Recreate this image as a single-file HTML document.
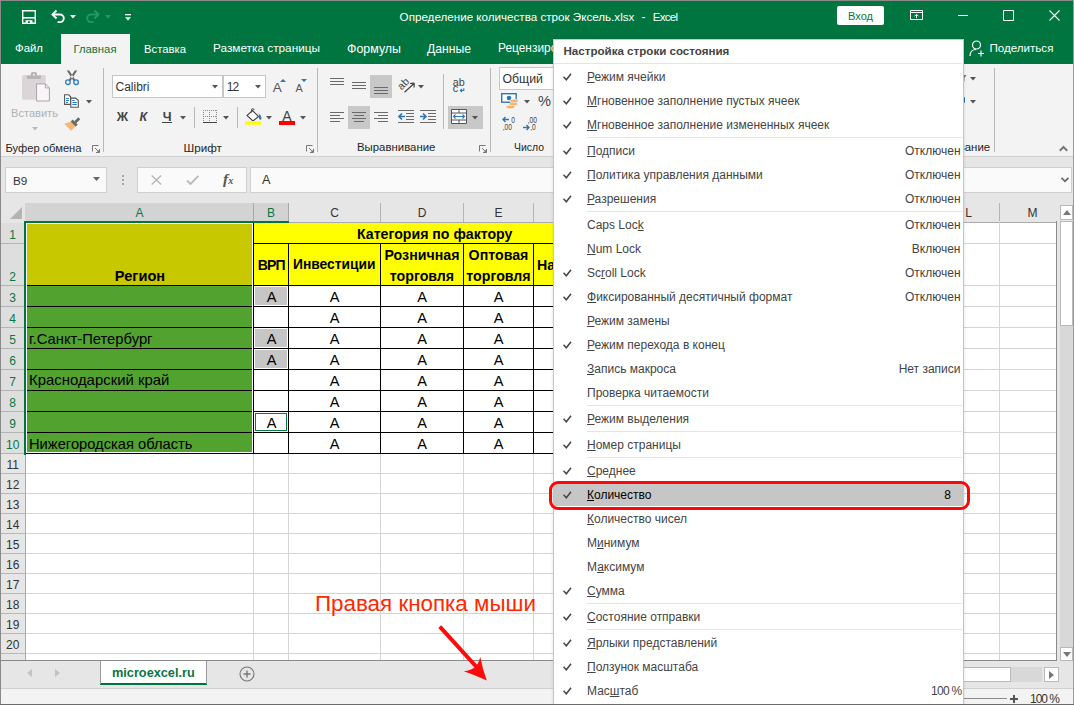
<!DOCTYPE html><html lang="ru"><head><meta charset="utf-8"><title>Excel</title><style>
*{box-sizing:border-box;margin:0;padding:0}
html,body{width:1074px;height:705px;overflow:hidden;background:#fff}
body{font-family:"Liberation Sans",sans-serif;font-size:12px;color:#444;position:relative}
.a{position:absolute}
.t{position:absolute;white-space:nowrap;line-height:1}
.w{color:#fff}
.g{color:#0a7641}
.ms{position:absolute;left:587px;width:375px;height:1px;background:#e2e4e7}
u{text-decoration:underline;text-underline-offset:.5px;text-decoration-thickness:1px}
</style></head><body><div class="a" style="left:0px;top:0px;width:1074px;height:64px;background:#007540;"></div><div class="t w" style="left:399.6px;top:10.83px;font-size:11.63px;">Определение количества строк Эксель.xlsx</div><div class="t w" style="left:641.5px;top:11.15px;font-size:12px;">-</div><div class="t w" style="left:652.8px;top:11.35px;font-size:11.6px;letter-spacing:-0.773px;">Excel</div><svg class="a" style="left:22px;top:10px" width="14" height="14" viewBox="0 0 14 14"><path d="M.7.7h12.600v12.600H.7z" fill="none" stroke="#fff" stroke-width="1.4"/><path d="M1 7.800h12" stroke="#fff" stroke-width="1.6"/><path d="M3.5 10.200h7V13h-7z" fill="#fff"/><path d="M6 11.200h1.800V13H6z" fill="#007540"/></svg><svg class="a" style="left:50px;top:9px" width="16" height="16" viewBox="0 0 16 16"><path d="M2.5 5.500h7.500a3.8 3.8 0 0 1 0 7.600H7.5" fill="none" stroke="#fff" stroke-width="1.9"/><path d="M6.5 1.500l-4 4 4 4" fill="none" stroke="#fff" stroke-width="1.9"/></svg><svg class="a" style="left:70px;top:15px" width="6" height="4" viewBox="0 0 6 4"><path d="M0 0h6L3 3.500z" fill="#fff"/></svg><svg class="a" style="left:85px;top:9px" width="16" height="16" viewBox="0 0 16 16"><path d="M13.5 5.500H6a3.8 3.8 0 0 0 0 7.600h2.5" fill="none" stroke="#23996a" stroke-width="1.9"/><path d="M9.5 1.500l4 4-4 4" fill="none" stroke="#23996a" stroke-width="1.9"/></svg><svg class="a" style="left:105px;top:15px" width="6" height="4" viewBox="0 0 6 4"><path d="M0 0h6L3 3.500z" fill="#23996a"/></svg><svg class="a" style="left:125px;top:14px" width="6" height="8" viewBox="0 0 6 8"><path d="M0 0h6v1.300H0z" fill="#fff"/><path d="M0 3.200h6L3 6.500z" fill="#fff"/></svg><div class="a" style="left:837px;top:6px;width:47px;height:19px;background:#fff;border-radius:2px"></div><div class="t g" style="left:848px;top:10.62px;font-size:11.05px;">Вход</div><svg class="a" style="left:910px;top:10px" width="13" height="10" viewBox="0 0 13 10"><path d="M.5.5h12v9H.5z" fill="none" stroke="#fff"/><path d="M.5 2.500h12" stroke="#fff"/><path d="M6.5 8V4.500M4.5 6.300l2-2 2 2" fill="none" stroke="#fff"/></svg><div class="a" style="left:958px;top:15px;width:10px;height:1px;background:#fff;"></div><svg class="a" style="left:1003px;top:10px" width="11" height="11" viewBox="0 0 11 11"><path d="M.5.5h10v10H.5z" fill="none" stroke="#fff"/></svg><svg class="a" style="left:1049px;top:10px" width="11" height="11" viewBox="0 0 11 11"><path d="M.5.5l10 10M10.5 .5l-10 10" stroke="#fff" stroke-width="1.1"/></svg><div class="a" style="left:61px;top:34px;width:69px;height:30px;background:#f3f3f3;"></div><div class="t w" style="left:15px;top:43.45px;font-size:11.39px;">Файл</div><div class="t g" style="left:73.5px;top:43.5px;font-size:11.3px;">Главная</div><div class="t w" style="left:144px;top:43.5px;font-size:11.3px;">Вставка</div><div class="t w" style="left:213px;top:43.25px;font-size:11.8px;">Разметка страницы</div><div class="t w" style="left:347px;top:42.95px;font-size:12.41px;">Формулы</div><div class="t w" style="left:427px;top:43.06px;font-size:12.18px;">Данные</div><div class="t w" style="left:498px;top:43.19px;font-size:11.92px;">Рецензирование</div><div class="t w" style="left:989.5px;top:43.35px;font-size:11.59px;">Поделиться</div><svg class="a" style="left:969px;top:40px" width="16" height="17" viewBox="0 0 16 17"><circle cx="7.5" cy="5" r="4" fill="none" stroke="#fff" stroke-width="1.2"/><path d="M1 16c0-4 2.5-6.5 6-6.5" fill="none" stroke="#fff" stroke-width="1.2"/><path d="M9 13.500h6M12 10.500v6" stroke="#fff" stroke-width="1.2"/></svg><div class="a" style="left:0px;top:64px;width:1074px;height:92px;background:#f3f3f3;"></div><div class="a" style="left:0px;top:156px;width:1074px;height:1px;background:#d0d0d0;"></div><div class="a" style="left:0px;top:157px;width:1074px;height:548px;background:#e6e6e6;"></div><svg class="a" style="left:22px;top:71px" width="29" height="32" viewBox="0 0 29 32"><rect x="0" y="4" width="23.8" height="24.7" rx="1.8" fill="#dbd5d8"/><rect x="4.9" y="4.4" width="14.1" height="3.6" rx=".8" fill="#b9b3b6"/><rect x="8.9" y="1.1" width="6" height="5" rx="1.5" fill="#b9b3b6"/><circle cx="11.9" cy="3.8" r="1" fill="#f3f3f3"/><path d="M14.6 12.900h8.800l4 4v13.100h-12.800z" fill="#f9f5f8" stroke="#aaa4a7"/><path d="M23.4 12.900v4h4" fill="none" stroke="#aaa4a7"/></svg><div class="t " style="left:11px;top:107.61px;font-size:11.09px;color:#b1b1b1">Вставить</div><svg class="a" style="left:32px;top:127px" width="6" height="4" viewBox="0 0 6 4"><path d="M0 0h6L3 3.500z" fill="#b9b9b9"/></svg><svg class="a" style="left:64px;top:70px" width="16" height="16" viewBox="0 0 16 16"><path d="M2.8 .5h2.400l6 9.3-1.7 1.200zM13.2 .5h-2.400l-6 9.3 1.7 1.200z" fill="#666"/><circle cx="3.9" cy="12.2" r="2.3" fill="none" stroke="#2f7dc1" stroke-width="1.3"/><circle cx="12.1" cy="12.2" r="2.3" fill="none" stroke="#2f7dc1" stroke-width="1.3"/></svg><svg class="a" style="left:64px;top:94px" width="16" height="15" viewBox="0 0 16 15"><path d="M.6.800h4l2 2v7.600h-6z" fill="#fff" stroke="#555" stroke-width="1.1"/><path d="M2 4.500h3M2 6.500h3M2 8.500h2" stroke="#2f7dc1"/><path d="M6.8 4.100h5l2.5 2.500v6.600H6.800z" fill="#fff" stroke="#555" stroke-width="1.1"/><path d="M8.3 8.500h4.500M8.3 10.500h4.500M8.3 6.500h2.5" stroke="#2f7dc1"/></svg><svg class="a" style="left:86px;top:100px" width="6" height="4" viewBox="0 0 6 4"><path d="M0 0h6L3 3.500z" fill="#555"/></svg><svg class="a" style="left:64px;top:117px" width="17" height="15" viewBox="0 0 17 15"><path d="M15.3 1.300l-4 4" stroke="#666" stroke-width="2.7"/><path d="M7.6 3.600l5 5" stroke="#6a6a6a" stroke-width="3"/><path d="M.3 6.700l6.2-2 4.8 4.8-4.2 4.200z" fill="#f6b772"/></svg><div class="t " style="left:5.5px;top:142.56px;font-size:11.19px;color:#262626">Буфер обмена</div><svg class="a" style="left:92px;top:145px" width="8" height="8" viewBox="0 0 8 8"><path d="M.5 6.500V.5h6" fill="none" stroke="#777"/><path d="M3 3l4 4M7.5 4v3.500H4" fill="none" stroke="#777"/><path d="M7.5 7.500l-3 0 3-3z" fill="#777"/></svg><div class="a" style="left:103px;top:68px;width:1px;height:84px;background:#b9b9b9;"></div><div class="a" style="left:112px;top:75px;width:111px;height:23px;background:#fff;border:1px solid #c6c6c6"></div><div class="t " style="left:115.5px;top:81.15px;font-size:12.0px;color:#333">Calibri</div><svg class="a" style="left:212px;top:85px" width="6" height="4" viewBox="0 0 6 4"><path d="M0 0h6L3 3.500z" fill="#555"/></svg><div class="a" style="left:223px;top:75px;width:43px;height:23px;background:#fff;border:1px solid #c6c6c6"></div><div class="t " style="left:226.7px;top:81.15px;font-size:12px;letter-spacing:-0.923px;color:#333">12</div><svg class="a" style="left:255px;top:85px" width="6" height="4" viewBox="0 0 6 4"><path d="M0 0h6L3 3.500z" fill="#555"/></svg><div class="t " style="left:272.7px;top:80.9px;font-size:13.5px;color:#555">A</div><svg class="a" style="left:280px;top:79px" width="6" height="3" viewBox="0 0 6 3"><path d="M0 3L3 0l3 3z" fill="#2e75b6"/></svg><div class="t " style="left:295.5px;top:82.75px;font-size:10.8px;color:#555">A</div><svg class="a" style="left:301px;top:79px" width="6" height="3" viewBox="0 0 6 3"><path d="M0 0h6L3 3z" fill="#2e75b6"/></svg><div class="t " style="left:116.8px;top:110.9px;font-size:12.5px;font-weight:bold;color:#444">Ж</div><div class="t " style="left:139.5px;top:110.9px;font-size:12.5px;font-weight:bold;font-style:italic;color:#444">К</div><div class="t " style="left:162.7px;top:110.9px;font-size:12.5px;font-weight:bold;color:#444">Ч</div><div class="a" style="left:162px;top:122px;width:10px;height:1px;background:#444;"></div><svg class="a" style="left:180px;top:116px" width="6" height="4" viewBox="0 0 6 4"><path d="M0 0h6L3 3.500z" fill="#555"/></svg><div class="a" style="left:194px;top:107px;width:1px;height:21px;background:#b9b9b9;"></div><svg class="a" style="left:203px;top:110px" width="14" height="14" viewBox="0 0 14 14"><path shape-rendering="crispEdges" d="M0 .5h14M0 6.500h14M.5 0v12M6.5 0v12M13.5 0v12" fill="none" stroke="#8a8a8a" stroke-dasharray="1 1"/><path shape-rendering="crispEdges" d="M0 12.500h14" stroke="#444"/></svg><svg class="a" style="left:223px;top:116px" width="6" height="4" viewBox="0 0 6 4"><path d="M0 0h6L3 3.500z" fill="#555"/></svg><div class="a" style="left:237px;top:107px;width:1px;height:21px;background:#b9b9b9;"></div><svg class="a" style="left:245px;top:108px" width="18" height="17" viewBox="0 0 18 17"><path d="M7.5 2.500l6 6-5.5 4.5-6-5.500z" fill="#fff" stroke="#444" stroke-width="1.1"/><path d="M6.5 4.500V2a1.3 1.3 0 0 1 2.6 0" stroke="#444" stroke-width="1" fill="none"/><path d="M13 5c2.5 1.5 4.5 5 3 6.5-1.5 1-3-1.5-1.8-4.500z" fill="#2e75b6"/><path d="M0 13.200h16v3.500H0z" fill="#ffff00"/></svg><svg class="a" style="left:266px;top:116px" width="6" height="4" viewBox="0 0 6 4"><path d="M0 0h6L3 3.500z" fill="#555"/></svg><div class="t " style="left:282.3px;top:109.15px;font-size:14px;color:#444">A</div><div class="a" style="left:279px;top:121px;width:16px;height:4px;background:#ff0000;"></div><svg class="a" style="left:300px;top:116px" width="6" height="4" viewBox="0 0 6 4"><path d="M0 0h6L3 3.500z" fill="#555"/></svg><div class="t " style="left:183.5px;top:141.8px;font-size:11.7px;color:#262626">Шрифт</div><svg class="a" style="left:306px;top:145px" width="8" height="8" viewBox="0 0 8 8"><path d="M.5 6.500V.5h6" fill="none" stroke="#777"/><path d="M3 3l4 4M7.5 4v3.500H4" fill="none" stroke="#777"/><path d="M7.5 7.500l-3 0 3-3z" fill="#777"/></svg><div class="a" style="left:317px;top:68px;width:1px;height:84px;background:#b9b9b9;"></div><svg class="a" style="left:330px;top:78px" width="16" height="7" viewBox="0 0 16 7"><path d="M0 0.5h14" stroke="#6a6a6a"/><path d="M0 3.5h14" stroke="#6a6a6a"/><path d="M0 6.5h14" stroke="#6a6a6a"/></svg><svg class="a" style="left:352px;top:82px" width="16" height="7" viewBox="0 0 16 7"><path d="M0 0.5h14" stroke="#6a6a6a"/><path d="M0 3.5h14" stroke="#6a6a6a"/><path d="M0 6.5h14" stroke="#6a6a6a"/></svg><div class="a" style="left:370px;top:75px;width:22px;height:23px;background:#c8c8c8;"></div><svg class="a" style="left:374px;top:87px" width="16" height="7" viewBox="0 0 16 7"><path d="M0 0.5h14" stroke="#6a6a6a"/><path d="M0 3.5h14" stroke="#6a6a6a"/><path d="M0 6.5h14" stroke="#6a6a6a"/></svg><svg class="a" style="left:397px;top:77px" width="19" height="17" viewBox="0 0 19 17"><text x="0" y="0" font-size="10.5" fill="#444" transform="translate(4.5 13.5) rotate(-45)" font-family="Liberation Sans">ab</text><path d="M7.5 15.300L17 6.500M17.3 6.200l-4.3.3M17.3 6.200l-.3 4.3" stroke="#444" fill="none" stroke-width="1.2"/></svg><svg class="a" style="left:418px;top:85px" width="6" height="4" viewBox="0 0 6 4"><path d="M0 0h6L3 3.500z" fill="#555"/></svg><svg class="a" style="left:452px;top:77px" width="16" height="18" viewBox="0 0 16 18"><text x=".7" y="9" font-size="10.8" fill="#444" font-family="Liberation Sans">ab</text><text x=".7" y="15.3" font-size="10.8" fill="#444" font-family="Liberation Sans">c</text><path d="M11.8 11.300v2.200H8.300M10 12l-1.6 1.5 1.6 1.5" stroke="#2e75b6" fill="none" stroke-width="1.1"/></svg><svg class="a" style="left:330px;top:112px" width="16" height="10" viewBox="0 0 16 10"><path d="M0 0.5h14" stroke="#6a6a6a"/><path d="M0 3.5h10" stroke="#6a6a6a"/><path d="M0 6.5h14" stroke="#6a6a6a"/><path d="M0 9.5h10" stroke="#6a6a6a"/></svg><div class="a" style="left:348px;top:106px;width:22px;height:23px;background:#c8c8c8;"></div><svg class="a" style="left:352px;top:112px" width="16" height="10" viewBox="0 0 16 10"><path d="M0 0.5h14" stroke="#6a6a6a"/><path d="M2 3.5h10" stroke="#6a6a6a"/><path d="M0 6.5h14" stroke="#6a6a6a"/><path d="M2 9.5h10" stroke="#6a6a6a"/></svg><svg class="a" style="left:374px;top:112px" width="16" height="10" viewBox="0 0 16 10"><path d="M0 0.5h14" stroke="#6a6a6a"/><path d="M4 3.5h10" stroke="#6a6a6a"/><path d="M0 6.5h14" stroke="#6a6a6a"/><path d="M4 9.5h10" stroke="#6a6a6a"/></svg><svg class="a" style="left:398px;top:110px" width="16" height="13" viewBox="0 0 16 13"><path d="M0 .5h16M8 3.500h8M8 6.500h8M8 9.500h8M0 12.500h16" stroke="#6a6a6a"/><path d="M7 6.500H1.500M4 3.500L1 6.500l3 3" stroke="#2e75b6" fill="none" stroke-width="1.6"/></svg><svg class="a" style="left:420px;top:110px" width="16" height="13" viewBox="0 0 16 13"><path d="M0 .5h16M8 3.500h8M8 6.500h8M8 9.500h8M0 12.500h16" stroke="#6a6a6a"/><path d="M0 6.500h5.500M3 3.500l3 3-3 3" stroke="#2e75b6" fill="none" stroke-width="1.6"/></svg><div class="a" style="left:443px;top:74px;width:1px;height:55px;background:#b9b9b9;"></div><div class="a" style="left:448px;top:106px;width:35px;height:23px;background:#c8c8c8;"></div><svg class="a" style="left:451px;top:109px" width="16" height="15" viewBox="0 0 16 15"><path d="M.5.5h15v14H.5z" fill="#fff" stroke="#555"/><path d="M.5 4h15M.5 11h15M8 .5v3.500M8 11v3.5" stroke="#555" fill="none"/><path d="M3 7.500h10M4.5 5.500l-2 2 2 2M11.5 5.500l2 2-2 2" stroke="#2e75b6" fill="none" stroke-width="1.1"/></svg><svg class="a" style="left:472px;top:116px" width="6" height="4" viewBox="0 0 6 4"><path d="M0 0h6L3 3.500z" fill="#555"/></svg><div class="t " style="left:357px;top:142.45px;font-size:11.4px;color:#262626">Выравнивание</div><svg class="a" style="left:479px;top:145px" width="8" height="8" viewBox="0 0 8 8"><path d="M.5 6.500V.5h6" fill="none" stroke="#777"/><path d="M3 3l4 4M7.5 4v3.500H4" fill="none" stroke="#777"/><path d="M7.5 7.500l-3 0 3-3z" fill="#777"/></svg><div class="a" style="left:490px;top:68px;width:1px;height:84px;background:#b9b9b9;"></div><div class="a" style="left:499px;top:67px;width:120px;height:23px;background:#fff;border:1px solid #c6c6c6"></div><div class="t " style="left:502.5px;top:73.0px;font-size:12.31px;color:#333">Общий</div><svg class="a" style="left:501px;top:93px" width="19" height="17" viewBox="0 0 19 17"><rect x=".7" y=".7" width="14.5" height="8.5" fill="#fff" stroke="#2e75b6" stroke-width="1.4"/><circle cx="8" cy="5" r="2.3" fill="#2e75b6"/><ellipse cx="13" cy="8" rx="4.3" ry="1.7" fill="#f4b26a" stroke="#f3f3f3" stroke-width=".6"/><ellipse cx="12.5" cy="11" rx="4.3" ry="1.7" fill="#f4b26a" stroke="#f3f3f3" stroke-width=".6"/><ellipse cx="9.5" cy="14" rx="4.3" ry="1.7" fill="#f4b26a" stroke="#f3f3f3" stroke-width=".6"/></svg><svg class="a" style="left:524px;top:100px" width="6" height="4" viewBox="0 0 6 4"><path d="M0 0h6L3 3.500z" fill="#555"/></svg><div class="t " style="left:538px;top:93.84px;font-size:14.62px;color:#444">%</div><svg class="a" style="left:502px;top:116px" width="16" height="15" viewBox="0 0 16 15"><path d="M7 3.500H1M3.5 1L1 3.5 3.5 6" stroke="#2e75b6" fill="none" stroke-width="1.4"/><g transform="scale(.72 1)" font-size="9.3" fill="#444" font-family="Liberation Sans"><text x="13" y="7">0</text><text x="1" y="14.5">,00</text></g></svg><svg class="a" style="left:523px;top:116px" width="17" height="15" viewBox="0 0 17 15"><g transform="scale(.72 1)" font-size="9.3" fill="#444" font-family="Liberation Sans"><text x="6.5" y="7">,00</text><text x="10" y="14.5">,0</text></g><path d="M0 11.500h6M3.5 9L6 11.5 3.5 14" stroke="#2e75b6" fill="none" stroke-width="1.4"/></svg><div class="t " style="left:514px;top:143.44px;font-size:10.43px;color:#262626">Число</div><svg class="a" style="left:970px;top:77px" width="6" height="4" viewBox="0 0 6 4"><path d="M0 0h6L3 3.500z" fill="#555"/></svg><svg class="a" style="left:970px;top:100px" width="6" height="4" viewBox="0 0 6 4"><path d="M0 0h6L3 3.500z" fill="#555"/></svg><svg class="a" style="left:960px;top:75px" width="7" height="7" viewBox="0 0 7 7"><path d="M0 0h6.500L4.5 3v3.500L3 5.500V3z" fill="#777"/></svg><div class="a" style="left:963px;top:97px;width:2px;height:6px;background:#2e75b6;border-radius:1px"></div><div class="t " style="left:958.8px;top:142.43px;font-size:11.45px;color:#262626">вание</div><div class="a" style="left:994px;top:68px;width:1px;height:84px;background:#b9b9b9;"></div><svg class="a" style="left:1059px;top:145px" width="10" height="7" viewBox="0 0 10 7"><path d="M.8 5.700l3.7-3.7 3.7 3.7" fill="none" stroke="#777" stroke-width="2"/></svg><div class="a" style="left:5px;top:167px;width:102px;height:26px;background:#fafafa;border:1px solid #cfcfcf"></div><div class="t " style="left:13px;top:174.81px;font-size:11.69px;color:#333">B9</div><svg class="a" style="left:93px;top:177px" width="7" height="4" viewBox="0 0 7 4"><path d="M0 0h7L3.5 4z" fill="#666"/></svg><div class="a" style="left:122px;top:175px;width:2px;height:2px;background:#a8a8a8;"></div><div class="a" style="left:122px;top:179px;width:2px;height:2px;background:#a8a8a8;"></div><div class="a" style="left:122px;top:183px;width:2px;height:2px;background:#a8a8a8;"></div><div class="a" style="left:137px;top:167px;width:110px;height:26px;background:#fafafa;border:1px solid #cfcfcf"></div><svg class="a" style="left:151px;top:175px" width="11" height="10" viewBox="0 0 11 10"><path d="M.7.5l9.5 9M10.2 .5l-9.5 9" stroke="#b9b9b9" stroke-width="1.5"/></svg><svg class="a" style="left:186px;top:175px" width="14" height="10" viewBox="0 0 14 10"><path d="M1 5.500l3.5 3.500L12.5 .8" stroke="#b9b9b9" stroke-width="1.8" fill="none"/></svg><div class="t " style="left:223px;top:171px;font-size:15.500px;color:#555"><i style="font-family:'Liberation Serif',serif;font-weight:bold">f</i><span style="font-size:10px;font-style:italic;font-weight:bold;font-family:'Liberation Serif',serif">x</span></div><div class="a" style="left:250px;top:167px;width:822px;height:26px;background:#fafafa;border:1px solid #cfcfcf"></div><div class="t " style="left:262px;top:174.28px;font-size:12.74px;color:#333">A</div><svg class="a" style="left:1061px;top:177px" width="8" height="6" viewBox="0 0 8 6"><path d="M.5.800l3.5 3.5 3.5-3.5" fill="none" stroke="#666" stroke-width="1.7"/></svg><div class="a" style="left:25px;top:223px;width:1032px;height:437px;background:#fff;"></div><div class="a" style="left:25px;top:203px;width:264px;height:18px;background:#d3d3d3;"></div><div class="t " style="left:135.5px;top:207.15px;font-size:12px;color:#0a7641">A</div><div class="a" style="left:253px;top:203px;width:1px;height:19px;background:#a8a8a8;"></div><div class="t " style="left:267.0px;top:207.15px;font-size:12px;color:#0a7641">B</div><div class="a" style="left:288px;top:203px;width:1px;height:19px;background:#a8a8a8;"></div><div class="t " style="left:330.17px;top:207.15px;font-size:12px;color:#333">C</div><div class="a" style="left:380px;top:203px;width:1px;height:19px;background:#b4b4b4;"></div><div class="t " style="left:417.67px;top:207.15px;font-size:12px;color:#333">D</div><div class="a" style="left:463px;top:203px;width:1px;height:19px;background:#b4b4b4;"></div><div class="t " style="left:494.5px;top:207.15px;font-size:12px;color:#333">E</div><div class="a" style="left:533px;top:203px;width:1px;height:19px;background:#b4b4b4;"></div><div class="t " style="left:563.34px;top:207.15px;font-size:12px;color:#333">F</div><div class="a" style="left:600px;top:203px;width:1px;height:19px;background:#b4b4b4;"></div><div class="t " style="left:965.16px;top:207.15px;font-size:12px;color:#333">L</div><div class="a" style="left:999px;top:203px;width:1px;height:19px;background:#b4b4b4;"></div><div class="t " style="left:1027.5px;top:207.15px;font-size:12px;color:#333">M</div><div class="a" style="left:1065px;top:203px;width:1px;height:19px;background:#b4b4b4;"></div><div class="a" style="left:289px;top:222px;width:768px;height:1px;background:#ababab;"></div><svg class="a" style="left:10px;top:207px" width="12" height="12" viewBox="0 0 12 12"><path d="M12 0v12H0z" fill="#b4b4b4"/></svg><div class="a" style="left:1px;top:223px;width:23px;height:231px;background:#dedede;"></div><div class="t " style="left:9.36px;top:229.15px;font-size:12px;color:#0a7641">1</div><div class="a" style="left:1px;top:243px;width:24px;height:1px;background:#b4b4b4;"></div><div class="t " style="left:9.36px;top:271.15px;font-size:12px;color:#0a7641">2</div><div class="a" style="left:1px;top:285px;width:24px;height:1px;background:#b4b4b4;"></div><div class="t " style="left:9.36px;top:292.15px;font-size:12px;color:#0a7641">3</div><div class="a" style="left:1px;top:306px;width:24px;height:1px;background:#b4b4b4;"></div><div class="t " style="left:9.36px;top:313.15px;font-size:12px;color:#0a7641">4</div><div class="a" style="left:1px;top:327px;width:24px;height:1px;background:#b4b4b4;"></div><div class="t " style="left:9.36px;top:334.15px;font-size:12px;color:#0a7641">5</div><div class="a" style="left:1px;top:348px;width:24px;height:1px;background:#b4b4b4;"></div><div class="t " style="left:9.36px;top:355.15px;font-size:12px;color:#0a7641">6</div><div class="a" style="left:1px;top:369px;width:24px;height:1px;background:#b4b4b4;"></div><div class="t " style="left:9.36px;top:376.15px;font-size:12px;color:#0a7641">7</div><div class="a" style="left:1px;top:390px;width:24px;height:1px;background:#b4b4b4;"></div><div class="t " style="left:9.36px;top:397.15px;font-size:12px;color:#0a7641">8</div><div class="a" style="left:1px;top:411px;width:24px;height:1px;background:#b4b4b4;"></div><div class="t " style="left:9.36px;top:418.15px;font-size:12px;color:#0a7641">9</div><div class="a" style="left:1px;top:432px;width:24px;height:1px;background:#b4b4b4;"></div><div class="t " style="left:6.03px;top:439.15px;font-size:12px;color:#0a7641">10</div><div class="a" style="left:1px;top:453px;width:24px;height:1px;background:#b4b4b4;"></div><div class="t " style="left:6.47px;top:459.15px;font-size:12px;color:#333">11</div><div class="a" style="left:1px;top:473px;width:24px;height:1px;background:#b8b8b8;"></div><div class="t " style="left:6.03px;top:479.15px;font-size:12px;color:#333">12</div><div class="a" style="left:1px;top:493px;width:24px;height:1px;background:#b8b8b8;"></div><div class="t " style="left:6.03px;top:499.15px;font-size:12px;color:#333">13</div><div class="a" style="left:1px;top:513px;width:24px;height:1px;background:#b8b8b8;"></div><div class="t " style="left:6.03px;top:519.15px;font-size:12px;color:#333">14</div><div class="a" style="left:1px;top:533px;width:24px;height:1px;background:#b8b8b8;"></div><div class="t " style="left:6.03px;top:539.15px;font-size:12px;color:#333">15</div><div class="a" style="left:1px;top:553px;width:24px;height:1px;background:#b8b8b8;"></div><div class="t " style="left:6.03px;top:559.15px;font-size:12px;color:#333">16</div><div class="a" style="left:1px;top:573px;width:24px;height:1px;background:#b8b8b8;"></div><div class="t " style="left:6.03px;top:579.15px;font-size:12px;color:#333">17</div><div class="a" style="left:1px;top:593px;width:24px;height:1px;background:#b8b8b8;"></div><div class="t " style="left:6.03px;top:599.15px;font-size:12px;color:#333">18</div><div class="a" style="left:1px;top:613px;width:24px;height:1px;background:#b8b8b8;"></div><div class="t " style="left:6.03px;top:619.15px;font-size:12px;color:#333">19</div><div class="a" style="left:1px;top:633px;width:24px;height:1px;background:#b8b8b8;"></div><div class="t " style="left:6.03px;top:639.15px;font-size:12px;color:#333">20</div><div class="a" style="left:1px;top:653px;width:24px;height:1px;background:#b8b8b8;"></div><div class="a" style="left:25px;top:455px;width:1px;height:205px;background:#a8a8a8;"></div><div class="a" style="left:26px;top:473px;width:1030px;height:1px;background:#d4d4d4;"></div><div class="a" style="left:26px;top:493px;width:1030px;height:1px;background:#d4d4d4;"></div><div class="a" style="left:26px;top:513px;width:1030px;height:1px;background:#d4d4d4;"></div><div class="a" style="left:26px;top:533px;width:1030px;height:1px;background:#d4d4d4;"></div><div class="a" style="left:26px;top:553px;width:1030px;height:1px;background:#d4d4d4;"></div><div class="a" style="left:26px;top:573px;width:1030px;height:1px;background:#d4d4d4;"></div><div class="a" style="left:26px;top:593px;width:1030px;height:1px;background:#d4d4d4;"></div><div class="a" style="left:26px;top:613px;width:1030px;height:1px;background:#d4d4d4;"></div><div class="a" style="left:26px;top:633px;width:1030px;height:1px;background:#d4d4d4;"></div><div class="a" style="left:26px;top:653px;width:1030px;height:1px;background:#d4d4d4;"></div><div class="a" style="left:253px;top:454px;width:1px;height:206px;background:#d4d4d4;"></div><div class="a" style="left:288px;top:454px;width:1px;height:206px;background:#d4d4d4;"></div><div class="a" style="left:380px;top:454px;width:1px;height:206px;background:#d4d4d4;"></div><div class="a" style="left:463px;top:454px;width:1px;height:206px;background:#d4d4d4;"></div><div class="a" style="left:533px;top:454px;width:1px;height:206px;background:#d4d4d4;"></div><div class="a" style="left:999px;top:454px;width:1px;height:206px;background:#d4d4d4;"></div><div class="a" style="left:964px;top:243px;width:92px;height:1px;background:#d4d4d4;"></div><div class="a" style="left:964px;top:285px;width:92px;height:1px;background:#d4d4d4;"></div><div class="a" style="left:964px;top:306px;width:92px;height:1px;background:#d4d4d4;"></div><div class="a" style="left:964px;top:327px;width:92px;height:1px;background:#d4d4d4;"></div><div class="a" style="left:964px;top:348px;width:92px;height:1px;background:#d4d4d4;"></div><div class="a" style="left:964px;top:369px;width:92px;height:1px;background:#d4d4d4;"></div><div class="a" style="left:964px;top:390px;width:92px;height:1px;background:#d4d4d4;"></div><div class="a" style="left:964px;top:411px;width:92px;height:1px;background:#d4d4d4;"></div><div class="a" style="left:964px;top:432px;width:92px;height:1px;background:#d4d4d4;"></div><div class="a" style="left:964px;top:453px;width:92px;height:1px;background:#d4d4d4;"></div><div class="a" style="left:999px;top:221px;width:1px;height:232px;background:#d4d4d4;"></div><div class="a" style="left:27px;top:224px;width:225px;height:61px;background:#c8c800;"></div><div class="a" style="left:27px;top:286px;width:225px;height:166px;background:#52a230;"></div><div class="a" style="left:254px;top:223px;width:400px;height:62px;background:#ffff00;"></div><div class="a" style="left:24px;top:221px;width:265px;height:2px;background:#007540;"></div><div class="a" style="left:24px;top:221px;width:2px;height:234px;background:#007540;"></div><div class="a" style="left:254px;top:243px;width:400px;height:1px;background:#000;"></div><div class="a" style="left:27px;top:285px;width:225px;height:1px;background:#000;"></div><div class="a" style="left:253px;top:285px;width:401px;height:1px;background:#000;"></div><div class="a" style="left:27px;top:306px;width:225px;height:1px;background:#000;"></div><div class="a" style="left:253px;top:306px;width:401px;height:1px;background:#000;"></div><div class="a" style="left:27px;top:327px;width:225px;height:1px;background:#000;"></div><div class="a" style="left:253px;top:327px;width:401px;height:1px;background:#000;"></div><div class="a" style="left:27px;top:348px;width:225px;height:1px;background:#000;"></div><div class="a" style="left:253px;top:348px;width:401px;height:1px;background:#000;"></div><div class="a" style="left:27px;top:369px;width:225px;height:1px;background:#000;"></div><div class="a" style="left:253px;top:369px;width:401px;height:1px;background:#000;"></div><div class="a" style="left:27px;top:390px;width:225px;height:1px;background:#000;"></div><div class="a" style="left:253px;top:390px;width:401px;height:1px;background:#000;"></div><div class="a" style="left:27px;top:411px;width:225px;height:1px;background:#000;"></div><div class="a" style="left:253px;top:411px;width:401px;height:1px;background:#000;"></div><div class="a" style="left:27px;top:432px;width:225px;height:1px;background:#000;"></div><div class="a" style="left:253px;top:432px;width:401px;height:1px;background:#000;"></div><div class="a" style="left:26px;top:453px;width:628px;height:1px;background:#000;"></div><div class="a" style="left:253px;top:223px;width:1px;height:231px;background:#000;"></div><div class="a" style="left:288px;top:243px;width:1px;height:211px;background:#000;"></div><div class="a" style="left:380px;top:243px;width:1px;height:211px;background:#000;"></div><div class="a" style="left:463px;top:243px;width:1px;height:211px;background:#000;"></div><div class="a" style="left:533px;top:243px;width:1px;height:211px;background:#000;"></div><div class="a" style="left:254px;top:286px;width:34px;height:20px;background:#c6c6c6;border:1px solid #fff"></div><div class="t " style="left:266.63px;top:289.85px;font-size:14.6px;color:#000">A</div><div class="t " style="left:329.63px;top:289.85px;font-size:14.6px;color:#000">A</div><div class="t " style="left:417.13px;top:289.85px;font-size:14.6px;color:#000">A</div><div class="t " style="left:493.63px;top:289.85px;font-size:14.6px;color:#000">A</div><div class="t " style="left:329.63px;top:310.85px;font-size:14.6px;color:#000">A</div><div class="t " style="left:417.13px;top:310.85px;font-size:14.6px;color:#000">A</div><div class="t " style="left:493.63px;top:310.85px;font-size:14.6px;color:#000">A</div><div class="a" style="left:254px;top:328px;width:34px;height:20px;background:#c6c6c6;border:1px solid #fff"></div><div class="t " style="left:266.63px;top:331.85px;font-size:14.6px;color:#000">A</div><div class="t " style="left:329.63px;top:331.85px;font-size:14.6px;color:#000">A</div><div class="t " style="left:417.13px;top:331.85px;font-size:14.6px;color:#000">A</div><div class="t " style="left:493.63px;top:331.85px;font-size:14.6px;color:#000">A</div><div class="a" style="left:254px;top:349px;width:34px;height:20px;background:#c6c6c6;border:1px solid #fff"></div><div class="t " style="left:266.63px;top:352.85px;font-size:14.6px;color:#000">A</div><div class="t " style="left:329.63px;top:352.85px;font-size:14.6px;color:#000">A</div><div class="t " style="left:417.13px;top:352.85px;font-size:14.6px;color:#000">A</div><div class="t " style="left:493.63px;top:352.85px;font-size:14.6px;color:#000">A</div><div class="t " style="left:329.63px;top:373.85px;font-size:14.6px;color:#000">A</div><div class="t " style="left:417.13px;top:373.85px;font-size:14.6px;color:#000">A</div><div class="t " style="left:493.63px;top:373.85px;font-size:14.6px;color:#000">A</div><div class="t " style="left:329.63px;top:394.85px;font-size:14.6px;color:#000">A</div><div class="t " style="left:417.13px;top:394.85px;font-size:14.6px;color:#000">A</div><div class="t " style="left:493.63px;top:394.85px;font-size:14.6px;color:#000">A</div><div class="a" style="left:254px;top:412px;width:34px;height:20px;background:#fff;border:1px solid #fff;outline:1px solid #0a7641;outline-offset:-2px"></div><div class="t " style="left:266.63px;top:415.85px;font-size:14.6px;color:#000">A</div><div class="t " style="left:329.63px;top:415.85px;font-size:14.6px;color:#000">A</div><div class="t " style="left:417.13px;top:415.85px;font-size:14.6px;color:#000">A</div><div class="t " style="left:493.63px;top:415.85px;font-size:14.6px;color:#000">A</div><div class="t " style="left:329.63px;top:436.85px;font-size:14.6px;color:#000">A</div><div class="t " style="left:417.13px;top:436.85px;font-size:14.6px;color:#000">A</div><div class="t " style="left:493.63px;top:436.85px;font-size:14.6px;color:#000">A</div><div class="t " style="left:114.86px;top:268.85px;font-size:14.6px;font-weight:bold;color:#000">Регион</div><div class="t " style="left:357px;top:227.08px;font-size:14.15px;font-weight:bold;color:#000">Категория по фактору</div><div class="t " style="left:257.8px;top:258.15px;font-size:14px;font-weight:bold;letter-spacing:-0.871px;color:#000">ВРП</div><div class="t " style="left:293px;top:258.23px;font-size:13.83px;font-weight:bold;color:#000">Инвестиции</div><div class="t " style="left:384.51px;top:248.05px;font-size:14.2px;font-weight:bold;color:#000">Розничная</div><div class="t " style="left:389.82px;top:269.05px;font-size:14.2px;font-weight:bold;color:#000">торговля</div><div class="t " style="left:468.61px;top:248.05px;font-size:14.2px;font-weight:bold;color:#000">Оптовая</div><div class="t " style="left:466.32px;top:269.05px;font-size:14.2px;font-weight:bold;color:#000">торговля</div><div class="t " style="left:537px;top:258.05px;font-size:14.2px;font-weight:bold;color:#000">Налоги</div><div class="t " style="left:29px;top:331.76px;font-size:14.77px;color:#000">г.Санкт-Петербург</div><div class="t " style="left:29px;top:373.19px;font-size:14.92px;color:#000">Краснодарский край</div><div class="t " style="left:29px;top:436.79px;font-size:14.71px;color:#000">Нижегородская область</div><div class="a" style="left:1056px;top:221px;width:1px;height:440px;background:#8a8a8a;"></div><div class="a" style="left:1px;top:660px;width:1056px;height:1px;background:#8a8a8a;"></div><div class="a" style="left:1057px;top:203px;width:17px;height:457px;background:#e6e6e6;"></div><div class="a" style="left:1060px;top:205px;width:13px;height:15px;background:#fff;border:1px solid #b9b9b9"></div><svg class="a" style="left:1063px;top:210px" width="8" height="5" viewBox="0 0 8 5"><path d="M0 5L4 0l4 5z" fill="#777"/></svg><div class="a" style="left:1060px;top:221px;width:13px;height:105px;background:#fff;border:1px solid #b9b9b9"></div><div class="a" style="left:1060px;top:326px;width:13px;height:321px;background:#d8d8d8;"></div><div class="a" style="left:1060px;top:647px;width:13px;height:14px;background:#fff;border:1px solid #b9b9b9"></div><svg class="a" style="left:1063px;top:652px" width="8" height="5" viewBox="0 0 8 5"><path d="M0 0h8L4 5z" fill="#777"/></svg><div class="a" style="left:0px;top:661px;width:1074px;height:27px;background:#e6e6e6;"></div><div class="a" style="left:100px;top:661px;width:107px;height:23px;background:#fff;"></div><div class="a" style="left:100px;top:683px;width:107px;height:2px;background:#007540;"></div><div class="a" style="left:100px;top:661px;width:1px;height:23px;background:#9a9a9a;"></div><div class="a" style="left:206px;top:661px;width:1px;height:23px;background:#9a9a9a;"></div><div class="t g" style="left:112px;top:667.29px;font-size:12.72px;font-weight:bold;">microexcel.ru</div><svg class="a" style="left:27px;top:669px" width="5" height="8" viewBox="0 0 5 8"><path d="M5 0v8L0 4z" fill="#c3c3c3"/></svg><svg class="a" style="left:55px;top:669px" width="5" height="8" viewBox="0 0 5 8"><path d="M0 0v8l5-4z" fill="#c3c3c3"/></svg><svg class="a" style="left:239px;top:666px" width="16" height="16" viewBox="0 0 16 16"><circle cx="8" cy="8" r="7" fill="none" stroke="#777" stroke-width="1.1"/><path d="M4.5 8h7M8 4.500v7" stroke="#777" stroke-width="1.4"/></svg><div class="a" style="left:960px;top:667px;width:51px;height:15px;background:#fff;border:1px solid #b9b9b9"></div><div class="a" style="left:1011px;top:667px;width:31px;height:15px;background:#d8d8d8;"></div><div class="a" style="left:1044px;top:667px;width:15px;height:15px;background:#fff;border:1px solid #b9b9b9"></div><svg class="a" style="left:1049px;top:671px" width="5" height="8" viewBox="0 0 5 8"><path d="M0 0v8l5-4z" fill="#777"/></svg><div class="a" style="left:0px;top:688px;width:1074px;height:17px;background:#f3f3f3;"></div><div class="a" style="left:0px;top:688px;width:1074px;height:1px;background:#d0d0d0;"></div><div class="a" style="left:960px;top:698px;width:47px;height:1px;background:#8a8a8a;"></div><div class="a" style="left:1010px;top:698px;width:8px;height:2px;background:#555;"></div><div class="a" style="left:1013px;top:695px;width:2px;height:8px;background:#555;"></div><div class="t " style="left:1030px;top:693.15px;font-size:12px;letter-spacing:-1.005px;color:#333">100 %</div><div class="t " style="left:315px;top:593.46px;font-size:22.38px;color:#ff2800">Правая кнопка мыши</div><svg class="a" style="left:430px;top:620px" width="70" height="70" viewBox="0 0 70 70"><path d="M9.8 6.600L47 47.5" stroke="#ff0a0a" stroke-width="4"/><path d="M56.8 60.600Q45 55 33.8 51.300Q41 50.5 46 46.500Q49 42.5 50.3 37Q52.5 49 56.8 60.600z" fill="#ff0a0a"/></svg><div class="a" style="left:553px;top:39px;width:411px;height:666px;background:#fff;border:1px solid #c6c6c6;border-bottom:none;box-shadow:0 0 3px rgba(0,0,0,.13)"></div><div class="t " style="left:563.5px;top:46.35px;font-size:11.59px;font-weight:bold;color:#444">Настройка строки состояния</div><div class="ms" style="top:63px;left:554px;width:408px"></div><div class="t " style="left:587px;top:71.15px;font-size:12px;color:#444"><u>Р</u>ежим ячейки</div><svg class="a" style="left:563px;top:73px" width="9" height="8" viewBox="0 0 9 8"><path d="M.5 3.800l2.8 3L8 .8" fill="none" stroke="#444" stroke-width="1.5"/></svg><div class="t " style="left:587px;top:95.15px;font-size:12px;color:#444"><u>М</u>гновенное заполнение пустых ячеек</div><svg class="a" style="left:563px;top:97px" width="9" height="8" viewBox="0 0 9 8"><path d="M.5 3.800l2.8 3L8 .8" fill="none" stroke="#444" stroke-width="1.5"/></svg><div class="t " style="left:587px;top:119.15px;font-size:12px;color:#444"><u>М</u>гновенное заполнение измененных ячеек</div><svg class="a" style="left:563px;top:121px" width="9" height="8" viewBox="0 0 9 8"><path d="M.5 3.800l2.8 3L8 .8" fill="none" stroke="#444" stroke-width="1.5"/></svg><div class="ms" style="top:137px"></div><div class="t " style="left:587px;top:145.15px;font-size:12px;color:#444"><u>П</u>одписи</div><div class="t " style="left:905.0px;top:145.15px;font-size:12px;color:#444">Отключен</div><svg class="a" style="left:563px;top:147px" width="9" height="8" viewBox="0 0 9 8"><path d="M.5 3.800l2.8 3L8 .8" fill="none" stroke="#444" stroke-width="1.5"/></svg><div class="t " style="left:587px;top:169.15px;font-size:12px;color:#444"><u>П</u>олитика управления данными</div><div class="t " style="left:905.0px;top:169.15px;font-size:12px;color:#444">Отключен</div><svg class="a" style="left:563px;top:171px" width="9" height="8" viewBox="0 0 9 8"><path d="M.5 3.800l2.8 3L8 .8" fill="none" stroke="#444" stroke-width="1.5"/></svg><div class="t " style="left:587px;top:193.15px;font-size:12px;color:#444"><u>Р</u>азрешения</div><div class="t " style="left:905.0px;top:193.15px;font-size:12px;color:#444">Отключен</div><svg class="a" style="left:563px;top:195px" width="9" height="8" viewBox="0 0 9 8"><path d="M.5 3.800l2.8 3L8 .8" fill="none" stroke="#444" stroke-width="1.5"/></svg><div class="ms" style="top:211px"></div><div class="t " style="left:587px;top:219.15px;font-size:12px;color:#444">Caps Loc<u>k</u></div><div class="t " style="left:905.0px;top:219.15px;font-size:12px;color:#444">Отключен</div><div class="t " style="left:587px;top:243.15px;font-size:12px;color:#444"><u>N</u>um Lock</div><div class="t " style="left:911.82px;top:243.15px;font-size:12px;color:#444">Включен</div><div class="t " style="left:587px;top:267.15px;font-size:12px;color:#444">Sc<u>r</u>oll Lock</div><div class="t " style="left:905.0px;top:267.15px;font-size:12px;color:#444">Отключен</div><svg class="a" style="left:563px;top:269px" width="9" height="8" viewBox="0 0 9 8"><path d="M.5 3.800l2.8 3L8 .8" fill="none" stroke="#444" stroke-width="1.5"/></svg><div class="t " style="left:587px;top:291.15px;font-size:12px;color:#444"><u>Ф</u>иксированный десятичный формат</div><div class="t " style="left:905.0px;top:291.15px;font-size:12px;color:#444">Отключен</div><svg class="a" style="left:563px;top:293px" width="9" height="8" viewBox="0 0 9 8"><path d="M.5 3.800l2.8 3L8 .8" fill="none" stroke="#444" stroke-width="1.5"/></svg><div class="t " style="left:587px;top:315.15px;font-size:12px;color:#444"><u>Р</u>ежим замены</div><div class="t " style="left:587px;top:339.15px;font-size:12px;color:#444"><u>Р</u>ежим перехода в конец</div><svg class="a" style="left:563px;top:341px" width="9" height="8" viewBox="0 0 9 8"><path d="M.5 3.800l2.8 3L8 .8" fill="none" stroke="#444" stroke-width="1.5"/></svg><div class="t " style="left:587px;top:363.15px;font-size:12px;color:#444"><u>З</u>апись макроса</div><div class="t " style="left:898.65px;top:363.15px;font-size:12px;color:#444">Нет записи</div><div class="t " style="left:587px;top:387.15px;font-size:12px;color:#444">Проверка читаемости</div><div class="ms" style="top:405px"></div><div class="t " style="left:587px;top:413.15px;font-size:12px;color:#444"><u>Р</u>ежим выделения</div><svg class="a" style="left:563px;top:415px" width="9" height="8" viewBox="0 0 9 8"><path d="M.5 3.800l2.8 3L8 .8" fill="none" stroke="#444" stroke-width="1.5"/></svg><div class="ms" style="top:431px"></div><div class="t " style="left:587px;top:439.15px;font-size:12px;color:#444"><u>Н</u>омер страницы</div><svg class="a" style="left:563px;top:441px" width="9" height="8" viewBox="0 0 9 8"><path d="M.5 3.800l2.8 3L8 .8" fill="none" stroke="#444" stroke-width="1.5"/></svg><div class="ms" style="top:457px"></div><div class="t " style="left:587px;top:465.15px;font-size:12px;color:#444"><u>С</u>реднее</div><svg class="a" style="left:563px;top:467px" width="9" height="8" viewBox="0 0 9 8"><path d="M.5 3.800l2.8 3L8 .8" fill="none" stroke="#444" stroke-width="1.5"/></svg><div class="a" style="left:554px;top:484px;width:409px;height:22px;background:#c6c6c6;"></div><div class="t " style="left:587px;top:489.15px;font-size:12px;color:#000"><u>К</u>оличество</div><div class="t " style="left:944.33px;top:489.15px;font-size:12px;color:#000">8</div><svg class="a" style="left:563px;top:491px" width="9" height="8" viewBox="0 0 9 8"><path d="M.5 3.800l2.8 3L8 .8" fill="none" stroke="#444" stroke-width="1.5"/></svg><div class="t " style="left:587px;top:513.15px;font-size:12px;color:#444"><u>К</u>оличество чисел</div><div class="t " style="left:587px;top:537.15px;font-size:12px;color:#444">М<u>и</u>нимум</div><div class="t " style="left:587px;top:561.15px;font-size:12px;color:#444">М<u>а</u>ксимум</div><div class="t " style="left:587px;top:585.15px;font-size:12px;color:#444"><u>С</u>умма</div><svg class="a" style="left:563px;top:587px" width="9" height="8" viewBox="0 0 9 8"><path d="M.5 3.800l2.8 3L8 .8" fill="none" stroke="#444" stroke-width="1.5"/></svg><div class="ms" style="top:603px"></div><div class="t " style="left:587px;top:611.15px;font-size:12px;color:#444"><u>С</u>остояние отправки</div><svg class="a" style="left:563px;top:613px" width="9" height="8" viewBox="0 0 9 8"><path d="M.5 3.800l2.8 3L8 .8" fill="none" stroke="#444" stroke-width="1.5"/></svg><div class="ms" style="top:629px"></div><div class="t " style="left:587px;top:637.15px;font-size:12px;color:#444"><u>Я</u>рлыки представлений</div><svg class="a" style="left:563px;top:639px" width="9" height="8" viewBox="0 0 9 8"><path d="M.5 3.800l2.8 3L8 .8" fill="none" stroke="#444" stroke-width="1.5"/></svg><div class="t " style="left:587px;top:661.15px;font-size:12px;color:#444"><u>П</u>олзунок масштаба</div><svg class="a" style="left:563px;top:663px" width="9" height="8" viewBox="0 0 9 8"><path d="M.5 3.800l2.8 3L8 .8" fill="none" stroke="#444" stroke-width="1.5"/></svg><div class="t " style="left:587px;top:685.15px;font-size:12px;color:#444">Мас<u>ш</u>таб</div><div class="t " style="left:931px;top:685.15px;font-size:12px;letter-spacing:-0.705px;color:#444">100 %</div><svg class="a" style="left:563px;top:687px" width="9" height="8" viewBox="0 0 9 8"><path d="M.5 3.800l2.8 3L8 .8" fill="none" stroke="#444" stroke-width="1.5"/></svg><div class="a" style="left:549px;top:481px;width:421px;height:29px;border:3px solid #fa0808;border-radius:9px"></div><div class="a" style="left:0px;top:0px;width:1px;height:705px;background:#8a8a8a;"></div><div class="a" style="left:1073px;top:0px;width:1px;height:705px;background:#9a9a9a;"></div><div class="a" style="left:0px;top:0px;width:1074px;height:1px;background:#8a8a8a;"></div><div class="a" style="left:0px;top:704px;width:1074px;height:1px;background:#6a6a6a;"></div></body></html>
